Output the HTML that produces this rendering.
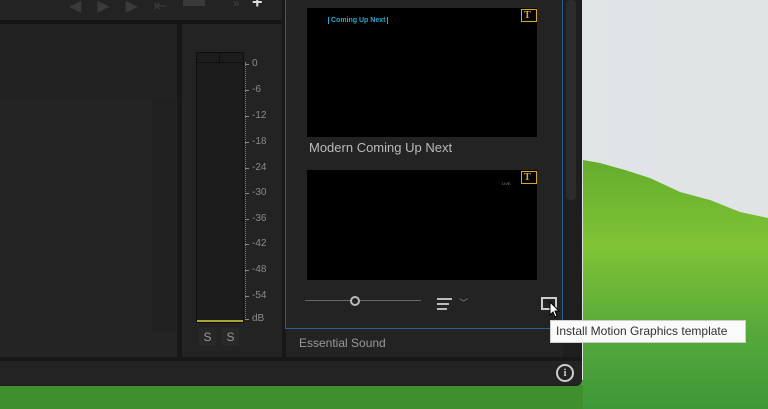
<!DOCTYPE html>
<html><head><style>
*{margin:0;padding:0;box-sizing:border-box}
body{width:768px;height:409px;overflow:hidden;position:relative;background:#e4e7e8;font-family:"Liberation Sans",sans-serif}
.a{position:absolute}
.lbl{position:absolute;left:252px;font-size:10px;color:#8a8a8a}
.tick{position:absolute;left:245px;width:4px;height:1px;background:#888}
</style></head><body>
<svg class="a" style="left:0;top:0" width="768" height="409">
<defs><linearGradient id="g" x1="0" y1="0" x2="0" y2="1"><stop offset="0" stop-color="#64ad2c"/><stop offset="0.35" stop-color="#80c436"/><stop offset="0.7" stop-color="#55a83a"/><stop offset="1" stop-color="#3e9838"/></linearGradient>
<linearGradient id="s" x1="0" y1="0" x2="1" y2="0"><stop offset="0" stop-color="#f2f3f3"/><stop offset="0.25" stop-color="#e3e6e7"/><stop offset="1" stop-color="#e0e4e5"/></linearGradient></defs>
<rect width="768" height="409" fill="url(#s)"/>
<path d="M583 160 L600 163 L625 170 L650 178 L680 192 L710 200 L740 212 L768 218 L768 409 L0 409 L0 380 L583 380Z" fill="url(#g)"/>
<rect x="0" y="385" width="583" height="24" fill="#3f8f2e"/>
</svg>
<!-- window -->
<div class="a" style="left:0;top:0;width:582px;height:386px;background:#1e1e1e;border-radius:0 0 6px 0"></div>
<div class="a" style="left:0;top:0;width:284px;height:20px;background:#232323"></div>
<div class="a" style="left:0;top:20px;width:281px;height:4px;background:#141414"></div>
<div class="a" style="left:69px;top:-4px;font-size:16px;color:#3a3a3a;letter-spacing:16px">◀▶▶⇤</div>
<div class="a" style="left:183px;top:0;width:22px;height:6px;background:#3a3a3a"></div>
<div class="a" style="left:233px;top:-4px;font-size:12px;color:#444">»</div>
<div class="a" style="left:252px;top:-8px;font-size:18px;color:#ddd;font-weight:bold">+</div>
<!-- left panel -->
<div class="a" style="left:0;top:24px;width:177px;height:333px;background:#242424"></div>
<div class="a" style="left:0;top:24px;width:177px;height:76px;background:#222"></div>
<div class="a" style="left:152px;top:100px;width:24px;height:232px;background:#212121"></div>
<div class="a" style="left:177px;top:24px;width:5px;height:337px;background:#171717"></div>
<!-- meter -->
<div class="a" style="left:182px;top:24px;width:100px;height:333px;background:#232323"></div>
<div class="a" style="left:196px;top:52px;width:48px;height:271px;background:#1c1c1c;border:1px solid #0e0e0e"></div>
<div class="a" style="left:196px;top:62px;width:48px;height:1px;background:#0e0e0e"></div>
<div class="a" style="left:219px;top:52px;width:1px;height:11px;background:#0e0e0e"></div>
<div class="a" style="left:197px;top:320px;width:46px;height:2px;background:#a8a830"></div>
<div class="a" style="left:245px;top:62px;width:1px;height:258px;border-left:1px dotted #777"></div>
<div class="tick" style="top:64px"></div><div class="lbl" style="top:58px">0</div>
<div class="tick" style="top:90px"></div><div class="lbl" style="top:84px">-6</div>
<div class="tick" style="top:116px"></div><div class="lbl" style="top:110px">-12</div>
<div class="tick" style="top:142px"></div><div class="lbl" style="top:136px">-18</div>
<div class="tick" style="top:168px"></div><div class="lbl" style="top:162px">-24</div>
<div class="tick" style="top:193px"></div><div class="lbl" style="top:187px">-30</div>
<div class="tick" style="top:219px"></div><div class="lbl" style="top:213px">-36</div>
<div class="tick" style="top:244px"></div><div class="lbl" style="top:238px">-42</div>
<div class="tick" style="top:270px"></div><div class="lbl" style="top:264px">-48</div>
<div class="tick" style="top:296px"></div><div class="lbl" style="top:290px">-54</div>
<div class="tick" style="top:319px"></div><div class="lbl" style="top:313px">dB</div>
<div class="a" style="left:199px;top:328px;width:17px;height:18px;background:#282828;color:#999;font-size:12px;text-align:center;line-height:18px">S</div>
<div class="a" style="left:222px;top:328px;width:17px;height:18px;background:#282828;color:#999;font-size:12px;text-align:center;line-height:18px">S</div>
<div class="a" style="left:282px;top:0;width:4px;height:361px;background:#181818"></div>
<!-- graphics panel -->
<div class="a" style="left:286px;top:0;width:277px;height:357px;background:#232323"></div>
<div class="a" style="left:285px;top:-2px;width:278px;height:331px;border:1px solid #2d5e8f"></div>
<div class="a" style="left:566px;top:0;width:10px;height:200px;background:#2c2c2c;border-radius:4px"></div>
<div class="a" style="left:307px;top:8px;width:230px;height:129px;background:#000"></div>
<div class="a" style="left:328px;top:17px;font-size:7px;color:#2aa8d0;border-left:1px solid #2aa8d0;border-right:1px solid #2aa8d0;padding:0 2px;font-weight:bold">Coming Up Next</div>
<div class="a" style="left:521px;top:9px;width:16px;height:13px;border:1px solid #d6a820;color:#d6a820;font-size:10px;font-weight:bold;line-height:11px;padding-left:2px;font-family:'Liberation Serif',serif">T</div>
<div class="a" style="left:309px;top:140px;font-size:13px;color:#bbb">Modern Coming Up Next</div>
<div class="a" style="left:307px;top:170px;width:230px;height:110px;background:#000"></div>
<div class="a" style="left:502px;top:181px;font-size:4px;color:#888">LIVE</div>
<div class="a" style="left:521px;top:171px;width:16px;height:13px;border:1px solid #d6a820;color:#d6a820;font-size:10px;font-weight:bold;line-height:11px;padding-left:2px;font-family:'Liberation Serif',serif">T</div>
<div class="a" style="left:305px;top:300px;width:116px;height:1px;background:#666"></div>
<div class="a" style="left:350px;top:296px;width:10px;height:10px;border:2px solid #bbb;border-radius:50%;background:#232323"></div>
<div class="a" style="left:437px;top:298px;width:15px;height:2px;background:#bbb"></div>
<div class="a" style="left:437px;top:303px;width:12px;height:2px;background:#bbb"></div>
<div class="a" style="left:437px;top:308px;width:10px;height:2px;background:#bbb"></div>
<div class="a" style="left:459px;top:296px;font-size:9px;color:#888">﹀</div>
<div class="a" style="left:541px;top:297px;width:16px;height:13px;border:2px solid #ccc"></div>
<svg class="a" style="left:548px;top:301px" width="14" height="18"><path d="M2 1 L2 14 L5 11 L7 16 L9 15 L7 10 L11 10Z" fill="#fff" stroke="#000" stroke-width="1"/></svg>
<div class="a" style="left:299px;top:336px;font-size:12px;color:#999">Essential Sound</div>
<div class="a" style="left:0;top:357px;width:582px;height:4px;background:#181818"></div>
<div class="a" style="left:0;top:361px;width:582px;height:24px;background:#232323;border-radius:0 0 6px 0"></div>
<div class="a" style="left:556px;top:364px;width:18px;height:18px;border:2px solid #ccc;border-radius:50%;color:#ccc;font-size:11px;font-weight:bold;text-align:center;line-height:14px;font-family:'Liberation Serif',serif">i</div>
<div class="a" style="left:550px;top:320px;width:196px;height:23px;background:#fafafa;border:1px solid #ccc;font-size:12px;color:#333;line-height:21px;padding-left:5px">Install Motion Graphics template</div>
</body></html>
